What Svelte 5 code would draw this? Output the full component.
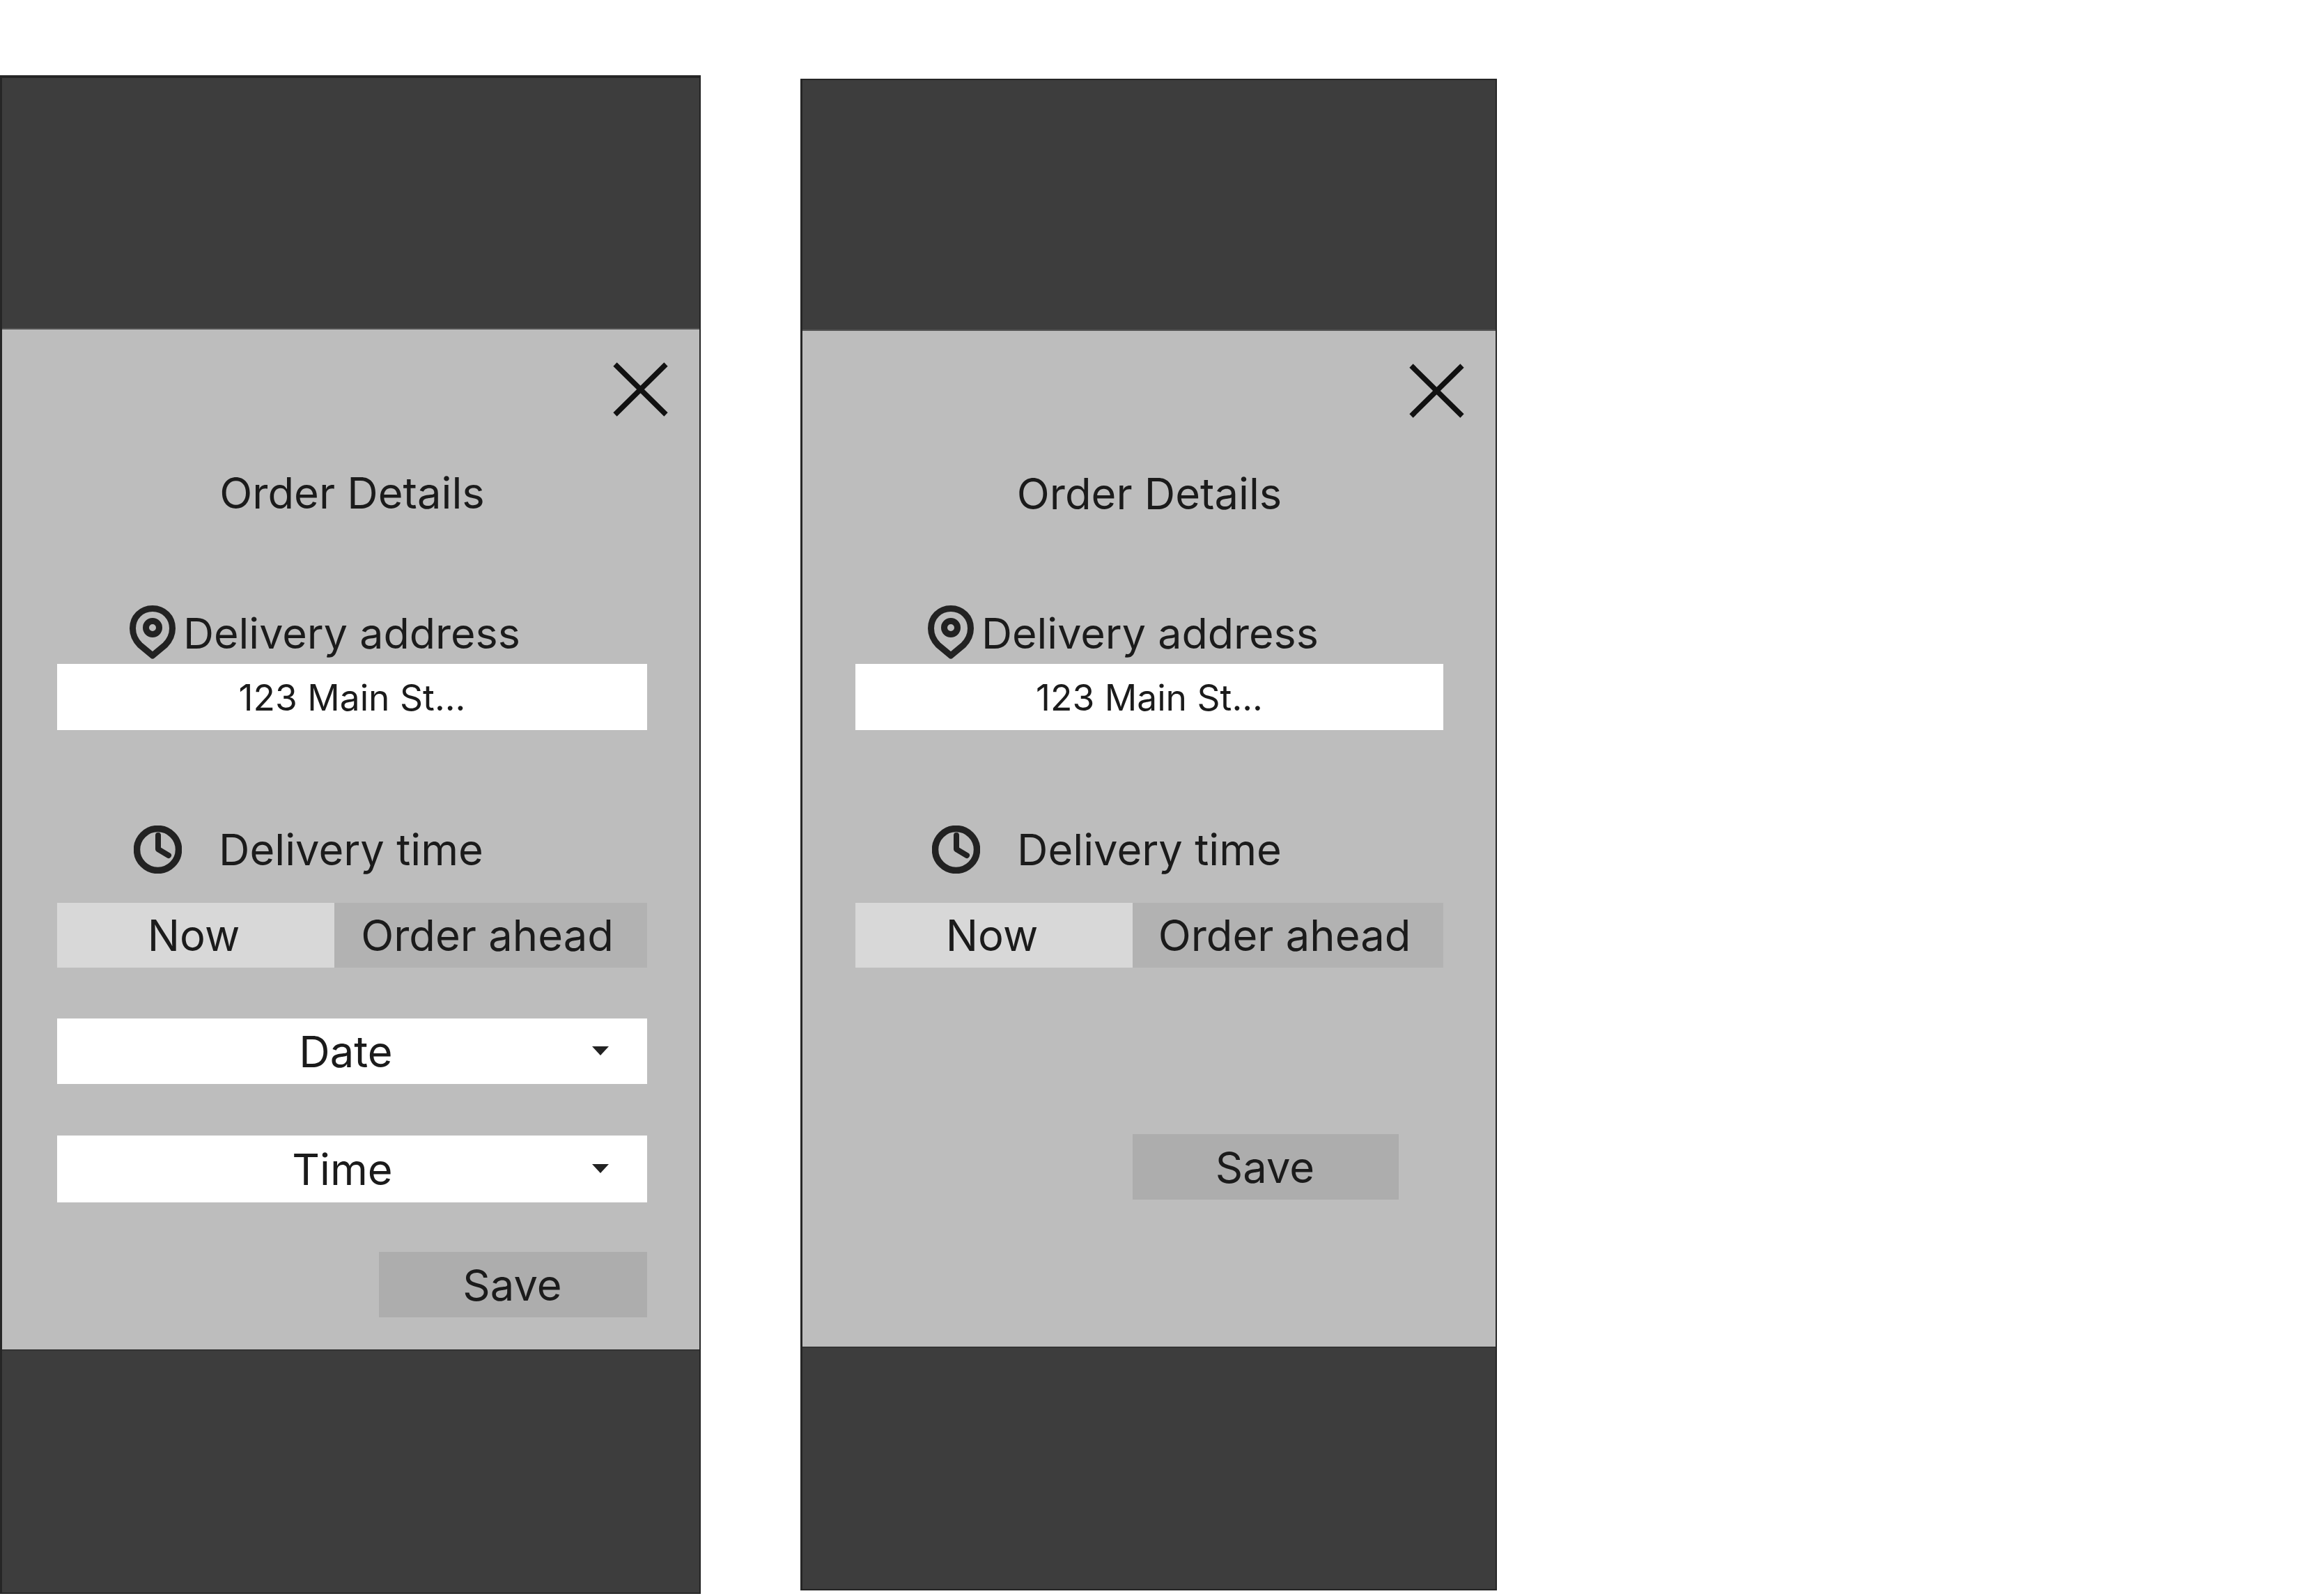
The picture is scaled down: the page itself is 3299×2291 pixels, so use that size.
<script>
  const phones = [
    { id: 'a', expanded: true },
    { id: 'b', expanded: false }
  ];
</script>

{#snippet phone(p)}
  <section class="phone {p.id}">
    <div class="shade top"></div>
    <div class="panel">
      <div class="close-row">
        <svg class="close" viewBox="0 0 79 78" aria-label="Close">
          <path d="M3 3 L76 75 M76 3 L3 75" fill="none" stroke="#111" stroke-width="7.5" />
        </svg>
      </div>
      <h1 class="title">Order Details</h1>

      <div class="label addr">
        <svg class="pin" viewBox="0 0 66 77">
          <path d="M33 4.500 C16.500 4.500 4.500 17 4.500 33 C4.500 44 9 51 15 57 L33 72 L51 57 C57 51 61.500 44 61.500 33 C61.500 17 49.500 4.500 33 4.500 Z" fill="none" stroke="#222" stroke-width="9" stroke-linejoin="round" />
          <circle cx="33" cy="32" r="9.500" fill="none" stroke="#222" stroke-width="9" />
        </svg>
        <span>Delivery address</span>
      </div>
      <div class="field address">123 Main St...</div>

      <div class="label when">
        <svg class="clock" viewBox="0 0 69 69">
          <circle cx="34.500" cy="34.500" r="30" fill="none" stroke="#222" stroke-width="9.500" />
          <path d="M35 14 V34 L50 43" fill="none" stroke="#222" stroke-width="8" stroke-linecap="round" stroke-linejoin="round" />
        </svg>
        <span>Delivery time</span>
      </div>
      <div class="segments">
        <div class="seg now">Now</div>
        <div class="seg ahead">Order ahead</div>
      </div>

      {#if p.expanded}
        <div class="field select date"><span>Date</span><i class="arrow"></i></div>
        <div class="field select time"><span>Time</span><i class="arrow"></i></div>
      {/if}

      <div class="save">Save</div>
    </div>
    <div class="shade bottom"></div>
  </section>
{/snippet}

<main class="board">
  {#each phones as p (p.id)}
    {@render phone(p)}
  {/each}
</main>

<style>
  :global(body) {
    margin: 0;
    background: #fff;
  }
  .board {
    width: 3299px;
    height: 2291px;
    display: flex;
    align-items: flex-start;
    font-family: Inter, "Liberation Sans", sans-serif;
    color: #1b1b1b;
    overflow: hidden;
  }
  .phone {
    box-sizing: border-box;
    display: flex;
    flex-direction: column;
    border: 2px solid #262626;
    border-left-width: 3px;
    flex: none;
  }
  .phone.a {
    width: 1006px;
    height: 2180px;
    margin-top: 108px;
    border-top-width: 4px;
  }
  .phone.b {
    width: 1000px;
    height: 2170px;
    margin-top: 113px;
    margin-left: 143px;
  }
  .shade {
    background: #3d3d3d;
    flex: none;
  }
  .a .shade.top { height: 359px; }
  .b .shade.top { height: 358px; }
  .shade.bottom { flex: 1; }
  .panel {
    background: #bdbdbd;
    flex: none;
    display: flex;
    flex-direction: column;
    border-top: 2px solid #555;
    border-bottom: 2px solid #333;
    box-sizing: border-box;
  }
  .a .panel { height: 1468px; padding: 0 75px 0 79px; }
  .b .panel { height: 1462px; padding: 0 75px 0 76px; }

  .close-row {
    display: flex;
    justify-content: flex-end;
    margin-right: -30px;
    padding-top: 47px;
  }
  .close {
    width: 79px;
    height: 78px;
    display: block;
  }
  .title {
    margin: 74px 0 0;
    font-size: 61.500px;
    font-weight: 400;
    line-height: 72px;
    text-align: center;
    white-space: nowrap;
  }
  .b .title { margin-top: 73px; }
  .label {
    display: flex;
    align-items: center;
    font-size: 61.500px;
    line-height: 72px;
    white-space: nowrap;
  }
  .label.addr {
    margin-top: 125px;
    padding-left: 104px;
    gap: 11px;
    font-size: 61px;
  }
  .b .label.addr { margin-top: 124px; padding-left: 104px; }
  .label.addr span { position: relative; top: 1px; }
  .label.when {
    margin-top: 137px;
    padding-left: 110px;
    gap: 53px;
    height: 69px;
  }
  .pin { width: 66px; height: 77px; flex: none; }
  .clock { width: 69px; height: 69px; flex: none; }

  .field {
    background: #fff;
    display: flex;
    align-items: center;
    justify-content: center;
    box-sizing: border-box;
    position: relative;
  }
  .field.address {
    margin-top: 7px;
    height: 95px;
    font-size: 51.500px;
  }
  .segments {
    display: flex;
    margin-top: 42px;
    height: 93px;
    font-size: 61.500px;
  }
  .seg {
    display: flex;
    align-items: center;
    justify-content: center;
    box-sizing: border-box;
  }
  .seg.now {
    width: 398px;
    background: #d8d8d8;
    padding-right: 6px;
  }
  .seg.ahead {
    flex: 1;
    background: #b2b2b2;
    padding-right: 10px;
  }
  .select {
    font-size: 61.500px;
  }
  .select.date {
    margin-top: 73px;
    height: 94px;
    padding-right: 18px;
  }
  .select.time {
    margin-top: 74px;
    height: 96px;
    padding-right: 28px;
  }
  .arrow {
    position: absolute;
    right: 55px;
    top: 50%;
    margin-top: -7px;
    width: 0;
    height: 0;
    border-left: 12px solid transparent;
    border-right: 12px solid transparent;
    border-top: 13px solid #222;
  }
  .save {
    display: flex;
    align-items: center;
    justify-content: center;
    background: #adadad;
    height: 94px;
    font-size: 61.500px;
    box-sizing: border-box;
    padding-right: 2px;
  }
  .a .save { width: 385px; margin: 71px 0 0 auto; }
  .b .save { width: 382px; margin: 239px 0 0 398px; }
</style>
